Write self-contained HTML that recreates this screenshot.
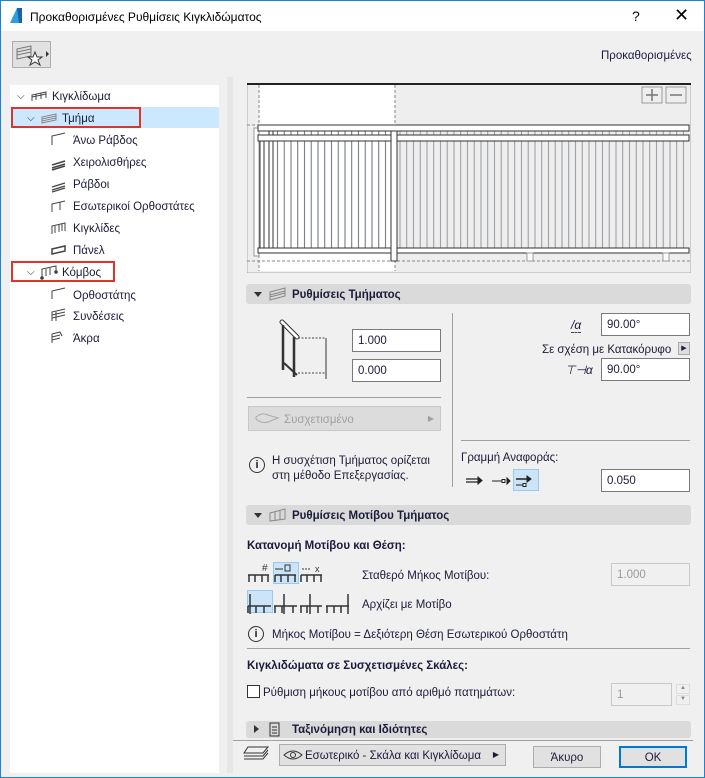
<!DOCTYPE html>
<html><head><meta charset="utf-8"><style>
*{box-sizing:border-box;margin:0;padding:0}
body{width:705px;height:778px;overflow:hidden;background:#f0f0f0;font-family:"Liberation Sans",sans-serif;font-size:11.5px;color:#1b1b3a;position:relative}
.a{position:absolute}
.t{margin-top:2px}
.win{position:absolute;left:0;top:0;width:705px;height:778px;border:1px solid #1883d7}
.title{position:absolute;left:1px;top:1px;width:703px;height:30px;background:#fff}
.inp{position:absolute;background:#fff;border:1px solid #7a7a7a;height:23px;padding:5px 0 0 5px;font-size:11.5px;color:#1b1b3a}
.dis{background:#f0f0f0;border-color:#c8c8c8;color:#999}
.hdr{position:absolute;left:246px;width:445px;height:20px;background:#dadada;border-radius:3px;font-weight:bold;font-size:11.5px;padding:5px 0 0 46px}
.tri{position:absolute;left:8px;top:8px;width:0;height:0;border-left:4px solid transparent;border-right:4px solid transparent;border-top:5px solid #333}
.tree div{position:absolute;height:18px;font-size:11.5px;margin-top:2px}
.btn{position:absolute;border:1px solid #adadad;background:#e1e1e1;text-align:center;padding-top:5px}
</style></head><body>
<div class="win"></div>
<div class="title"></div>
<svg class="a" style="left:8px;top:7px" width="16" height="17"><path d="M2 16 L9 1 L14 1 L14 16 Z" fill="#2aa0e0"/><path d="M9 1 L14 1 L14 16 L11 16 Z" fill="#1a5fa8"/></svg>
<div class="a" style="left:30px;top:10px;font-size:12px;color:#000">Προκαθορισμένες Ρυθμίσεις Κιγκλιδώματος</div>
<div class="a" style="left:632px;top:8px;font-size:14px;color:#000">?</div>
<div class="a" style="left:674px;top:5px;font-size:18px;color:#000">✕</div>

<div class="a" style="left:12px;top:41px;width:39px;height:27px;border:1px solid #adadad;background:#e1e1e1"></div>
<svg class="a" style="left:14px;top:43px" width="36" height="24"><g stroke="#777" fill="none"><path d="M3 6 L17 3 L17 13 L3 16 Z"/><path d="M3 9 L17 6 M3 12 L17 9"/></g><path d="M21 9 L23 14 L28 14 L24 17 L26 22 L21 19 L16 22 L18 17 L14 14 L19 14 Z" fill="#fff" stroke="#333"/><path d="M32 8 L35 11 L32 14 Z" fill="#333"/></svg>
<div class="a" style="left:601px;top:50px;font-size:11.5px">Προκαθορισμένες</div>

<div class="a" style="left:10px;top:85px;width:209px;height:688px;background:#fff"></div>
<div class="a" style="left:227px;top:77px;width:6px;height:696px;background:#e6e6e6"></div>
<div class="a" style="left:11px;top:107px;width:208px;height:21px;background:#cce8ff"></div>
<div class="a" style="left:11px;top:107px;width:130px;height:21px;border:2px solid #e0332a"></div>
<div class="a" style="left:11px;top:261px;width:104px;height:21px;border:2px solid #e0332a"></div>
<div class="tree">
<div style="left:17px;top:89px;font-size:10px">⌵</div><div style="left:52px;top:89px">Κιγκλίδωμα</div>
<div style="left:27px;top:111px;font-size:10px">⌵</div><div style="left:62px;top:111px">Τμήμα</div>
<div style="left:73px;top:133px">Άνω Ράβδος</div>
<div style="left:73px;top:155px">Χειρολισθήρες</div>
<div style="left:73px;top:177px">Ράβδοι</div>
<div style="left:73px;top:199px">Εσωτερικοί Ορθοστάτες</div>
<div style="left:73px;top:221px">Κιγκλίδες</div>
<div style="left:73px;top:243px">Πάνελ</div>
<div style="left:27px;top:265px;font-size:10px">⌵</div><div style="left:62px;top:265px">Κόμβος</div>
<div style="left:73px;top:288px">Ορθοστάτης</div>
<div style="left:73px;top:309px">Συνδέσεις</div>
<div style="left:73px;top:331px">Άκρα</div>
</div>
<svg class="a" style="left:30px;top:86px" width="40" height="260" fill="none" stroke="#444" stroke-width="1">
<path d="M2 15 L2 9 L16 6 L16 12 M6 14 L6 8 M11 13 L11 7 M2 11 L16 8"/>
<path d="M12 37 L12 31 L26 28 L26 34 Z M12 33 L26 30 M12 35 L26 32" stroke="#888"/>
<path d="M22 59 L22 50 L35 47" /><path d="M22 82 L35 78 M22 84 L35 80 M22 79 L35 75" stroke-width="1.5"/>
<path d="M22 104 L35 100 M22 106 L35 102 M22 101 L35 97" stroke-width="1.2"/>
<path d="M22 126 L22 118 L35 115 M30 116 L30 124"/>
<path d="M22 148 L22 140 L35 137 L35 145 M25 140 L25 147 M29 139 L29 146 M32 138 L32 145"/>
<path d="M22 168 L35 165 L35 160 L22 163 Z" stroke-width="1.5"/>
<path d="M12 192 L12 183 L26 180 L26 186 M16 183 L16 190 M20 182 L20 189"/><circle cx="12" cy="192" r="1.3" fill="#333"/><circle cx="26" cy="186" r="1.3" fill="#333"/>
<path d="M22 213 L22 205 L35 202"/>
<path d="M22 235 L22 226 L35 223 M22 229 L35 226 M22 232 L35 229 M26 235 L26 226"/>
<path d="M22 257 L22 248 L30 246 L32 250 M22 251 L30 249 M22 254 L30 252"/>
</svg>

<!-- preview -->
<svg class="a" style="left:247px;top:83px" width="444" height="190">
<rect x="0" y="0" width="444" height="190" fill="#eeeeee" stroke="#aaa"/>
<line x1="0" y1="1" x2="444" y2="1" stroke="#222" stroke-width="2"/>
<rect x="12" y="2" width="136" height="186" fill="#fff"/>
<line x1="12" y1="2" x2="12" y2="188" stroke="#888" stroke-dasharray="3,2"/>
<line x1="148" y1="2" x2="148" y2="188" stroke="#888" stroke-dasharray="3,2"/>
<line x1="0" y1="178" x2="444" y2="178" stroke="#888" stroke-dasharray="3,2"/>
<line x1="0" y1="42" x2="10" y2="42" stroke="#888" stroke-dasharray="3,2"/>
<rect x="395" y="4" width="20" height="16" fill="#eee" stroke="#999"/><path d="M399 12 H411 M405 6 V18" stroke="#777" stroke-width="1.5"/>
<rect x="419" y="4" width="20" height="16" fill="#eee" stroke="#999"/><path d="M423 12 H435" stroke="#777" stroke-width="1.5"/>
<defs><pattern id="g" x="150" y="0" width="6.75" height="200" patternUnits="userSpaceOnUse"><line x1="3" y1="0" x2="3" y2="200" stroke="#8a8f95" stroke-width="0.9"/></pattern>
<pattern id="d" x="14" y="0" width="6.75" height="200" patternUnits="userSpaceOnUse"><line x1="3" y1="0" x2="3" y2="200" stroke="#5a5f66" stroke-width="0.9"/></pattern></defs>
<rect x="150" y="48" width="292" height="118" fill="url(#g)"/>
<rect x="26" y="48" width="118" height="118" fill="url(#d)"/>
<rect x="7" y="45" width="5" height="128" fill="#fff" stroke="#999"/>
<rect x="13" y="58" width="4" height="108" fill="#fff" stroke="#333"/>
<rect x="22" y="48" width="4" height="118" fill="#fff" stroke="#333"/>
<rect x="11" y="42" width="431" height="6" fill="#fff" stroke="#333"/>
<rect x="11" y="52" width="431" height="6" fill="#fff" stroke="#333"/>
<rect x="11" y="165" width="431" height="5" fill="#fff" stroke="#333"/>
<rect x="144" y="48" width="6" height="130" fill="#fff" stroke="#333"/>
<rect x="280" y="170" width="6" height="8" fill="#fff" stroke="#999"/>
<rect x="416" y="170" width="6" height="8" fill="#fff" stroke="#999"/>
</svg>

<div class="hdr" style="top:284px"><span class="tri"></span>Ρυθμίσεις Τμήματος</div>
<svg class="a" style="left:268px;top:287px" width="20" height="14" fill="none" stroke="#888"><path d="M2 5 L17 1 L17 9 L2 13 Z M2 8 L17 4 M2 10 L17 6"/></svg>

<svg class="a" style="left:275px;top:315px" width="60" height="64" fill="none">
<path d="M7 7 L22 22" stroke="#333" stroke-width="5" stroke-linecap="round"/><path d="M7 7 L22 22" stroke="#fff" stroke-width="3" stroke-linecap="round"/>
<path d="M8 10 V55 M19 22 V62" stroke="#333" stroke-width="2.5"/>
<path d="M9 48 L22 60" stroke="#333" stroke-width="2"/>
<path d="M23 23 H51 M23 58 H51 M23 66 H51" stroke="#444" stroke-dasharray="2,1.5"/>
<path d="M51 23 V58 M51 58 V66" stroke="#333"/>
</svg>
<div class="inp" style="left:352px;top:329px;width:89px">1.000</div>
<div class="inp" style="left:352px;top:359px;width:89px">0.000</div>
<div class="a" style="left:247px;top:397px;width:194px;height:1px;background:#a0a0a0"></div>
<div class="a" style="left:248px;top:406px;width:193px;height:25px;background:#dcdcdc;border:1px solid #c8c8c8;color:#a0a0a0;padding:7px 0 0 35px">Συσχετισμένο<span style="position:absolute;right:6px;top:7px;font-size:8px">▶</span></div>
<svg class="a" style="left:254px;top:411px" width="28" height="14" fill="none" stroke="#aaa"><path d="M2 6 Q8 1 14 4 L24 7 L14 11 Q8 13 2 8 Z"/></svg>
<div class="a" style="left:249px;top:457px;width:16px;height:16px;border:1.5px solid #333;border-radius:50%;text-align:center;font-size:11px;font-weight:bold;line-height:14px">i</div>
<div class="a" style="left:272px;top:454px;line-height:15px">Η συσχέτιση Τμήματος ορίζεται<br>στη μέθοδο Επεξεργασίας.</div>
<div class="a" style="left:452px;top:313px;width:1px;height:174px;background:#a0a0a0"></div>

<div class="a" style="left:571px;top:318px;font-style:italic;font-size:12px;border-bottom:1px dashed #444">/α</div>
<div class="inp" style="left:601px;top:313px;width:89px">90.00°</div>
<div class="a" style="left:542px;top:344px">Σε σχέση με Κατακόρυφο</div>
<div class="a" style="left:678px;top:342px;width:12px;height:13px;background:#ddd;border:1px solid #aaa;font-size:7px;text-align:center;line-height:12px">▶</div>
<div class="a" style="left:565px;top:363px;font-style:italic;font-size:12px">⊤⊣α</div>
<div class="inp" style="left:601px;top:358px;width:89px">90.00°</div>
<div class="a" style="left:461px;top:440px;width:229px;height:1px;background:#a0a0a0"></div>
<div class="a" style="left:461px;top:452px">Γραμμή Αναφοράς:</div>
<div class="a" style="left:513px;top:469px;width:26px;height:22px;background:#cce4f7;border:1px solid #99c9ef"></div>
<svg class="a" style="left:464px;top:471px" width="80" height="20" stroke="#222" fill="#222"><path d="M2 8 H15 M2 11 H15" stroke-width="1.3"/><path d="M14 6 L18 9.5 L14 13Z"/><path d="M28 10 H38" /><rect x="38" y="8.5" width="3" height="3" fill="#fff"/><path d="M43 7 L46 10 L43 13Z"/><path d="M52 8 H64" stroke-width="1.5"/><path d="M63 5 L67 8 L63 11Z"/><path d="M52 14 H59"/><rect x="59" y="12.5" width="3" height="3" fill="#fff"/></svg>
<div class="inp" style="left:601px;top:469px;width:89px">0.050</div>

<div class="hdr" style="top:505px"><span class="tri"></span>Ρυθμίσεις Μοτίβου Τμήματος</div>
<svg class="a" style="left:268px;top:508px" width="20" height="14" fill="none" stroke="#888"><path d="M2 5 L17 1 L17 11 L2 13 Z M7 4 V12 M12 3 V12"/></svg>
<div class="a" style="left:247px;top:540px;font-weight:bold">Κατανομή Μοτίβου και Θέση:</div>
<div class="a" style="left:273px;top:562px;width:26px;height:22px;background:#cce4f7;border:1px solid #99c9ef"></div>
<div class="a" style="left:247px;top:590px;width:26px;height:23px;background:#cce4f7;border:1px solid #99c9ef"></div>
<svg class="a" style="left:247px;top:562px" width="115" height="55" fill="none" stroke="#333">
<path d="M1 13 H22 M2 13 V20 M8 13 V20 M15 13 V20 M21 13 V20" stroke-width="1.5"/>
<text x="15" y="9" font-size="10" fill="#333" stroke="none" font-family="Liberation Sans">#</text>
<path d="M28 13 H49 M28 13 V20 M34 13 V20 M41 13 V20 M48 13 V20" stroke-width="1.5"/><path d="M28 7 H36"/><rect x="38" y="3" width="5" height="6"/>
<path d="M54 13 H75 M54 13 V20 M60 13 V20 M67 13 V20 M74 13 V20" stroke-width="1.5"/><path d="M55 7 H64" stroke-dasharray="2,1"/><text x="68" y="10" font-size="9" fill="#333" stroke="none">x</text>
<path d="M1 44 H24 M1 44 V51 M9 44 V51 M17 44 V51 M3 32 V52" stroke-width="1.5"/>
<path d="M27 44 H50 M28 44 V51 M35 44 V51 M46 44 V51 M37 32 V52" stroke-width="1.5"/>
<path d="M53 44 H75 M54 44 V51 M60 44 V51 M71 44 V51 M63 32 V52" stroke-width="1.5"/>
<path d="M79 44 H102 M80 44 V51 M87 44 V51 M94 44 V51 M101 32 V52" stroke-width="1.5"/>
</svg>
<div class="a" style="left:362px;top:570px">Σταθερό Μήκος Μοτίβου:</div>
<div class="inp dis" style="left:611px;top:563px;width:79px">1.000</div>
<div class="a" style="left:362px;top:599px">Αρχίζει με Μοτίβο</div>
<div class="a" style="left:248px;top:626px;width:16px;height:16px;border:1.5px solid #333;border-radius:50%;text-align:center;font-size:11px;font-weight:bold;line-height:14px">i</div>
<div class="a" style="left:272px;top:629px">Μήκος Μοτίβου = Δεξιότερη Θέση Εσωτερικού Ορθοστάτη</div>
<div class="a" style="left:247px;top:648px;width:443px;height:1px;background:#a0a0a0"></div>
<div class="a" style="left:247px;top:660px;font-weight:bold">Κιγκλιδώματα σε Συσχετισμένες Σκάλες:</div>
<div class="a" style="left:247px;top:685px;width:13px;height:13px;background:#fff;border:1px solid #333"></div>
<div class="a" style="left:263px;top:687px">Ρύθμιση μήκους μοτίβου από αριθμό πατημάτων:</div>
<div class="inp dis" style="left:611px;top:683px;width:61px">1</div>
<div class="a" style="left:676px;top:684px;width:14px;height:10px;font-size:6px;color:#888;text-align:center;border:1px solid #ddd">▲</div>
<div class="a" style="left:676px;top:695px;width:14px;height:10px;font-size:6px;color:#888;text-align:center;border:1px solid #ddd">▼</div>

<div class="hdr" style="top:721px;height:17px;padding-top:3px"><span class="tri" style="top:4px;border:none;border-top:4px solid transparent;border-bottom:4px solid transparent;border-left:5px solid #333"></span>Ταξινόμηση και Ιδιότητες</div>
<svg class="a" style="left:268px;top:722px" width="14" height="16" fill="none" stroke="#333"><rect x="2" y="1" width="9" height="13"/><path d="M4 5 H9 M4 8 H9 M4 11 H9"/></svg>
<div class="a" style="left:233px;top:740px;width:460px;height:1px;background:#a0a0a0"></div>
<svg class="a" style="left:243px;top:745px" width="28" height="20" fill="none" stroke="#333"><path d="M5 2 H25 L20 8 H1 Z M1 11 H20 L25 5 M1 14 H20 L25 8"/></svg>
<div class="a" style="left:279px;top:744px;width:227px;height:22px;border:1px solid #adadad;background:#e1e1e1;padding:5px 0 0 25px">Εσωτερικό - Σκάλα και Κιγκλίδωμα<span style="position:absolute;right:6px;top:5px;font-size:8px">▶</span></div>
<svg class="a" style="left:283px;top:749px" width="20" height="12" fill="none" stroke="#333"><path d="M1 6 Q10 -2 19 6 Q10 14 1 6Z"/><circle cx="10" cy="6" r="2.5"/></svg>
<div class="btn" style="left:533px;top:746px;width:68px;height:22px">Άκυρο</div>
<div class="btn" style="left:619px;top:746px;width:68px;height:22px;border:2px solid #0078d7;padding-top:4px">OK</div>
</body></html>
